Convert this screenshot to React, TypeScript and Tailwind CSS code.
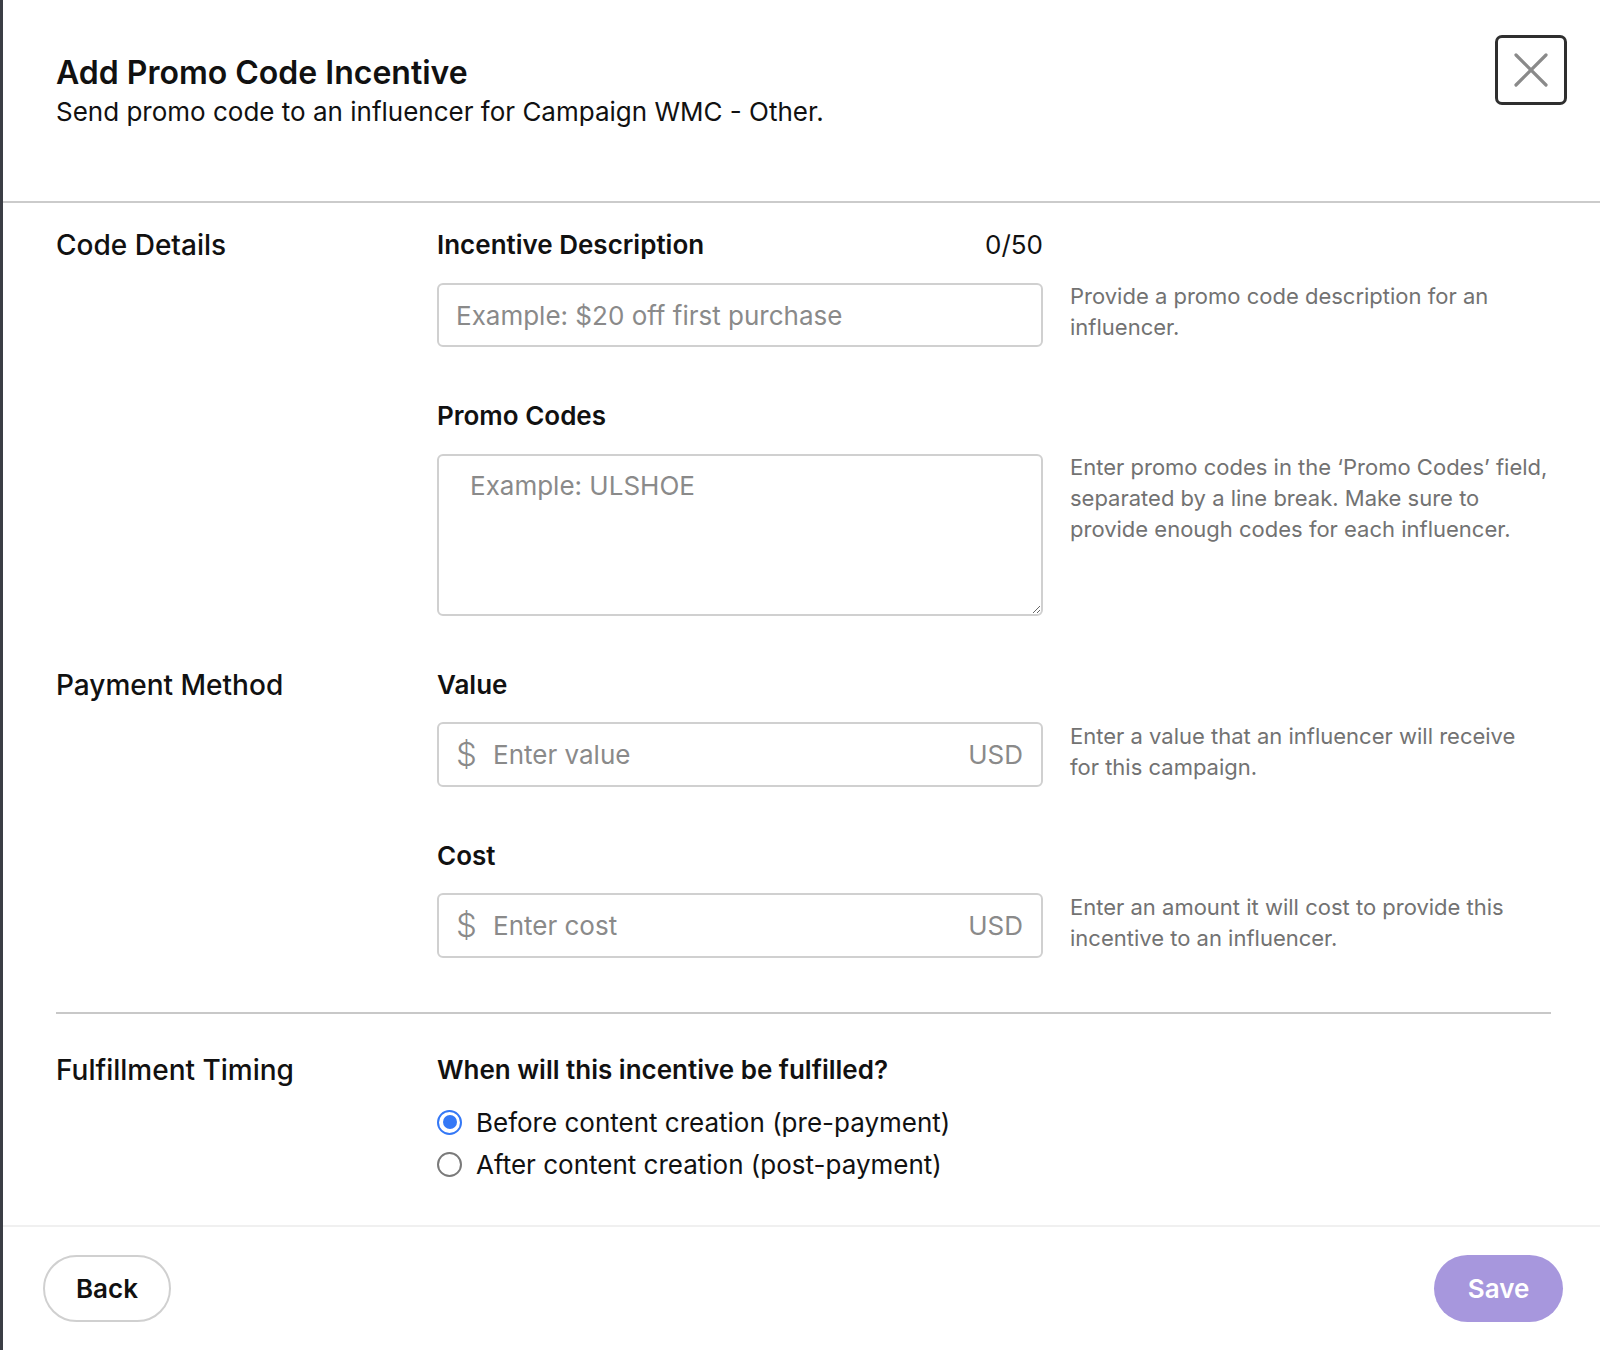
import { useState } from "react";

type Timing = "pre" | "post";

function FieldLabel({ children, right }: { children: React.ReactNode; right?: string }) {
  return (
    <div className="flex items-center justify-between text-[26px] leading-[32px] font-semibold text-[#111]">
      <span>{children}</span>
      {right && <span className="font-normal">{right}</span>}
    </div>
  );
}

// helper copy on the right; lines are kept as written so wrapping stays put
function Help({ lines }: { lines: string[] }) {
  return (
    <p className="mt-[52px] w-[477px] whitespace-nowrap text-[22px] leading-[31px] text-[#727272]">
      {lines.map((line) => (
        <span key={line} className="block">
          {line}
        </span>
      ))}
    </p>
  );
}

function SectionTitle({ children }: { children: React.ReactNode }) {
  return <div className="w-[381px] shrink-0 text-[28px] font-medium leading-[32px]">{children}</div>;
}

function MoneyInput({ placeholder }: { placeholder: string }) {
  return (
    <div className="flex h-[65px] items-center rounded-[6px] border-2 border-[#d0d0d0] pl-[17px] pr-[18px]">
      <span className="w-[37px] text-[33px] font-light leading-none text-[#8a8a8a]">$</span>
      <input
        placeholder={placeholder}
        className="min-w-0 flex-1 bg-transparent text-[26px] text-[#111] outline-none placeholder:text-[#8a8a8a]"
      />
      <span className="text-[26px] text-[#8a8a8a]">USD</span>
    </div>
  );
}

function Radio({ checked, label, onSelect }: { checked: boolean; label: string; onSelect: () => void }) {
  return (
    <button type="button" onClick={onSelect} className="flex h-[36px] items-center gap-[14px] text-left">
      {checked ? (
        <span className="flex h-[25px] w-[25px] items-center justify-center rounded-full border-[2.5px] border-[#3478f6]">
          <span className="h-[14px] w-[14px] rounded-full bg-[#3478f6]" />
        </span>
      ) : (
        <span className="h-[25px] w-[25px] rounded-full border-2 border-[#7a7a7a]" />
      )}
      <span className="text-[26px] text-[#111]">{label}</span>
    </button>
  );
}

export default function App() {
  const [timing, setTiming] = useState<Timing>("pre");
  const [description, setDescription] = useState("");

  return (
    <div className="h-[1350px] w-full border-l-[3px] border-[#3b3e45] bg-white font-[Inter,sans-serif] text-[#111]">
      {/* header */}
      <div className="flex h-[203px] items-start justify-between border-b-2 border-[#cbcbcb] pl-[53px] pr-[33px] pt-[35px]">
        <div className="mt-[18px]">
          <h1 className="text-[32px] font-semibold leading-[40px]">Add Promo Code Incentive</h1>
          <p className="mt-[3px] text-[26px] leading-[32px]">Send promo code to an influencer for Campaign WMC - Other.</p>
        </div>
        <button
          type="button"
          className="flex h-[70px] w-[72px] items-center justify-center rounded-[7px] border-[3px] border-[#2f2f2f]"
        >
          <svg width="34" height="34" viewBox="0 0 34 34" fill="none" stroke="#8a8a8a" strokeWidth="3.2" strokeLinecap="round">
            <path d="M2 2L32 32M32 2L2 32" />
          </svg>
        </button>
      </div>

      {/* body */}
      <div className="pl-[53px] pr-[49px] pt-[26px]">
        {/* code details */}
        <div className="flex">
          <SectionTitle>Code Details</SectionTitle>
          <div className="flex flex-col">
            <div className="flex items-start gap-[27px]">
              <div className="w-[606px] shrink-0">
                <FieldLabel right={`${description.length}/50`}>Incentive Description</FieldLabel>
                <input
                  value={description}
                  maxLength={50}
                  onChange={(e) => setDescription(e.target.value)}
                  placeholder="Example: $20 off first purchase"
                  className="mt-[22px] h-[64px] w-full rounded-[6px] border-2 border-[#d0d0d0] px-[17px] text-[26px] outline-none placeholder:text-[#8a8a8a]"
                />
              </div>
              <Help lines={["Provide a promo code description for an", "influencer."]} />
            </div>

            <div className="mt-[53px] flex items-start gap-[27px]">
              <div className="w-[606px] shrink-0">
                <FieldLabel>Promo Codes</FieldLabel>
                <textarea
                  placeholder="Example: ULSHOE"
                  className="mt-[22px] block h-[162px] w-full rounded-[6px] border-2 border-[#d0d0d0] px-[31px] pt-[14px] text-[26px] leading-[32px] outline-none placeholder:text-[#8a8a8a]"
                />
              </div>
              <Help
                lines={[
                  "Enter promo codes in the ‘Promo Codes’ field,",
                  "separated by a line break. Make sure to",
                  "provide enough codes for each influencer.",
                ]}
              />
            </div>
          </div>
        </div>

        {/* payment method */}
        <div className="mt-[53px] flex">
          <SectionTitle>Payment Method</SectionTitle>
          <div className="flex flex-col">
            <div className="flex items-start gap-[27px]">
              <div className="w-[606px] shrink-0">
                <FieldLabel>Value</FieldLabel>
                <div className="mt-[21px]">
                  <MoneyInput placeholder="Enter value" />
                </div>
              </div>
              <Help lines={["Enter a value that an influencer will receive", "for this campaign."]} />
            </div>
            <div className="mt-[53px] flex items-start gap-[27px]">
              <div className="w-[606px] shrink-0">
                <FieldLabel>Cost</FieldLabel>
                <div className="mt-[21px]">
                  <MoneyInput placeholder="Enter cost" />
                </div>
              </div>
              <Help lines={["Enter an amount it will cost to provide this", "incentive to an influencer."]} />
            </div>
          </div>
        </div>

        <div className="mt-[54px] h-[2px] bg-[#c8c8c8]" />

        {/* fulfillment timing */}
        <div className="mt-[40px] flex pb-[43px]">
          <SectionTitle>Fulfillment Timing</SectionTitle>
          <div>
            <FieldLabel>When will this incentive be fulfilled?</FieldLabel>
            <div className="mt-[18px] flex flex-col gap-[6px]">
              <Radio checked={timing === "pre"} label="Before content creation (pre-payment)" onSelect={() => setTiming("pre")} />
              <Radio checked={timing === "post"} label="After content creation (post-payment)" onSelect={() => setTiming("post")} />
            </div>
          </div>
        </div>
      </div>

      {/* footer */}
      <div className="flex items-center justify-between border-t-2 border-[#f0f0f0] pl-[40px] pr-[37px] pt-[28px]">
        <button
          type="button"
          className="h-[67px] w-[128px] rounded-full border-2 border-[#d0d0d0] text-[26px] font-semibold text-[#111]"
        >
          Back
        </button>
        <button type="button" className="h-[67px] w-[129px] rounded-full bg-[#a797dd] text-[26px] font-semibold text-white">
          Save
        </button>
      </div>
    </div>
  );
}
